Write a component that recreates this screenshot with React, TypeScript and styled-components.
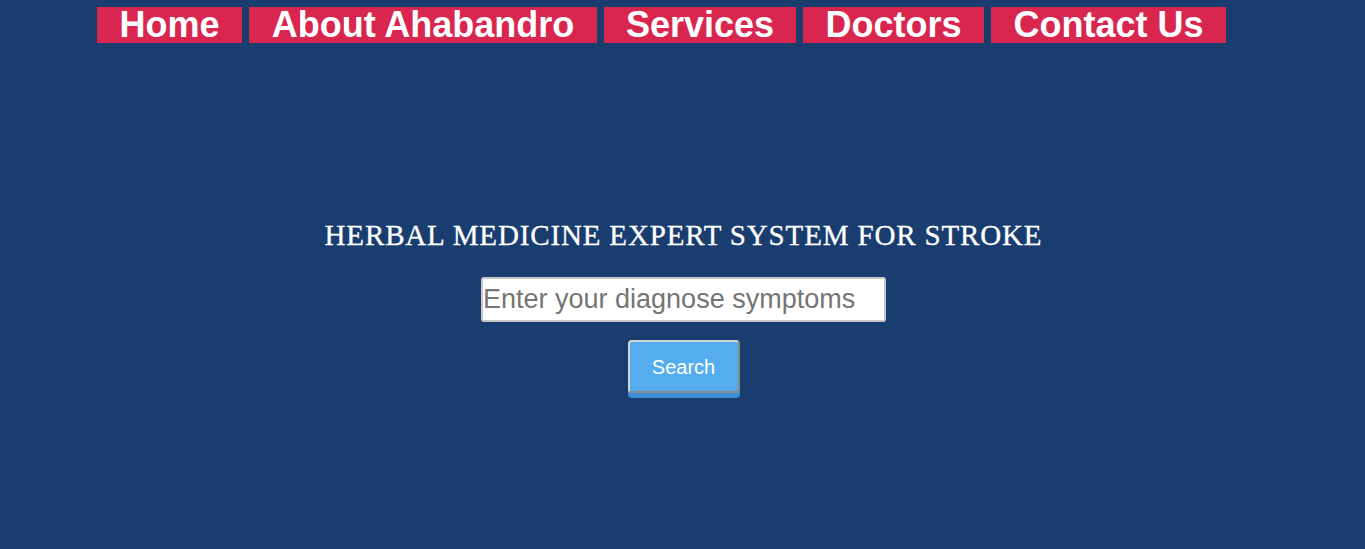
import styled, { createGlobalStyle } from "styled-components";

const GlobalStyle = createGlobalStyle`
  html, body {
    margin: 0;
    padding: 0;
    background: #1a3d6f;
  }
  body {
    font-family: "Liberation Sans", Arial, sans-serif;
  }
`;

const Page = styled.div`
  min-height: 549px;
  background: #1a3d6f;
`;

const Nav = styled.nav`
  display: flex;
  gap: 7px;
  padding: 7px 0 0 97px;
`;

const NavLink = styled.a<{ $w: number }>`
  display: block;
  height: 36px;
  line-height: 36px;
  padding: 0 22px;
  background: #d9264f;
  color: #fff;
  font-size: 36px;
  font-weight: bold;
  text-decoration: none;
  text-align: center;
  width: ${(p) => p.$w}px;
  box-sizing: border-box;
`;

const Main = styled.main`
  display: flex;
  flex-direction: column;
  align-items: center;
  padding-top: 175px;
  padding-left: 2px;
`;

const Title = styled.h1`
  margin: 0;
  font-family: "Liberation Serif", "Times New Roman", serif;
  font-weight: normal;
  font-size: 29px;
  line-height: 34px;
  color: #fff;
  letter-spacing: 0.85px;
  -webkit-text-stroke: 0.3px #fff;
`;

const Input = styled.input`
  margin-top: 25px;
  width: 405px;
  height: 45px;
  box-sizing: border-box;
  border: 2px solid #c8c8c8;
  border-radius: 3px;
  padding: 0;
  font-family: "Liberation Sans", Arial, sans-serif;
  font-size: 27px;
  color: #333;
  background: #fff;
  &::placeholder {
    color: #757575;
  }
`;

const Button = styled.button`
  margin-top: 18px;
  width: 112px;
  height: 53px;
  box-sizing: border-box;
  background: #55acee;
  border: 2px solid;
  border-color: #d6d6d6 #8a8a8a #8a8a8a #d6d6d6;
  border-radius: 4px;
  box-shadow: 0 5px 0 #3b8dd4;
  color: #fff;
  font-family: "Liberation Sans", Arial, sans-serif;
  font-size: 20px;
  padding: 2px 0 0;
  cursor: pointer;
`;

const links = [
  { label: "Home", w: 145 },
  { label: "About Ahabandro", w: 348 },
  { label: "Services", w: 192 },
  { label: "Doctors", w: 181 },
  { label: "Contact Us", w: 235 },
];

export default function App() {
  return (
    <Page>
      <GlobalStyle />
      <Nav>
        {links.map((l) => (
          <NavLink key={l.label} href="#" $w={l.w}>
            {l.label}
          </NavLink>
        ))}
      </Nav>
      <Main>
        <Title>HERBAL MEDICINE EXPERT SYSTEM FOR STROKE</Title>
        <Input type="text" placeholder="Enter your diagnose symptoms" />
        <Button>Search</Button>
      </Main>
    </Page>
  );
}
